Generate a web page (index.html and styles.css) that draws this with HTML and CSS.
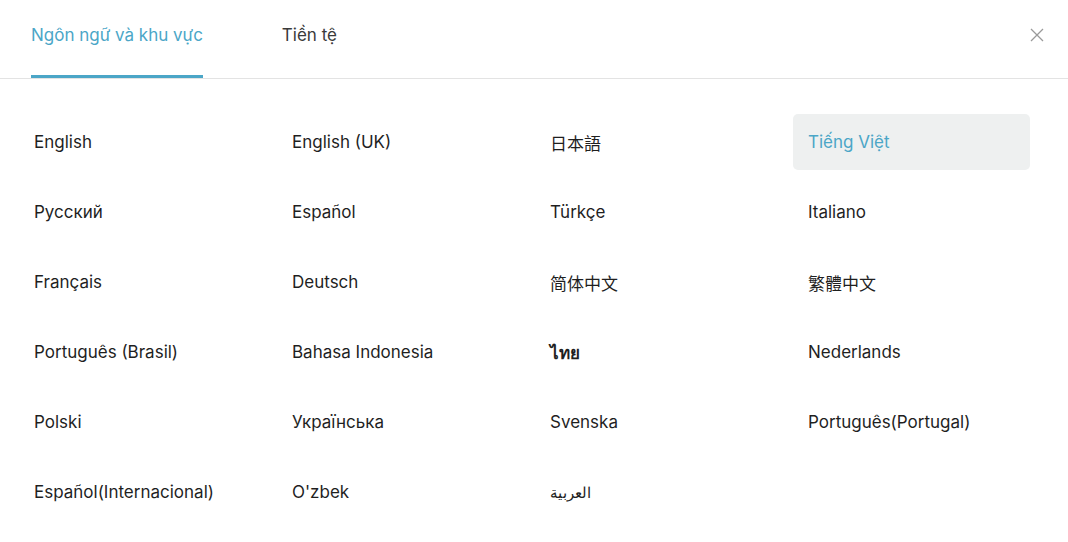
FILE: index.html
```
<!DOCTYPE html>
<html lang="vi">
<head>
    <meta charset="UTF-8">
    <meta name="viewport" content="width=device-width, initial-scale=1.0">
    <title>Ngôn ngữ và khu vực</title>
    <link rel="stylesheet" href="styles.css">
</head>
<body>

<div class="modal">
    <div class="modal-header">
        <div class="tabs">
            <div class="tab active">Ngôn ngữ và khu vực</div>
            <div class="tab">Tiền tệ</div>
        </div>
        <button class="close-btn" aria-label="Close">
            <svg width="14" height="14" viewBox="0 0 14 14">
                <path d="M1 1 L13 13 M13 1 L1 13" stroke="#9a9a9a" stroke-width="1.3" fill="none"/>
            </svg>
        </button>
    </div>
    <div class="lang-grid">
        <div class="lang">English</div>
        <div class="lang">English (UK)</div>
        <div class="lang">日本語</div>
        <div class="lang selected">Tiếng Việt</div>
        <div class="lang">Русский</div>
        <div class="lang">Español</div>
        <div class="lang">Türkçe</div>
        <div class="lang">Italiano</div>
        <div class="lang">Français</div>
        <div class="lang">Deutsch</div>
        <div class="lang">简体中文</div>
        <div class="lang">繁體中文</div>
        <div class="lang">Português (Brasil)</div>
        <div class="lang">Bahasa Indonesia</div>
        <div class="lang thai">ไทย</div>
        <div class="lang">Nederlands</div>
        <div class="lang">Polski</div>
        <div class="lang">Українська</div>
        <div class="lang">Svenska</div>
        <div class="lang">Português(Portugal)</div>
        <div class="lang">Español(Internacional)</div>
        <div class="lang">O'zbek</div>
        <div class="lang arabic">العربية</div>
    </div>
</div>

</body>
</html>
```

FILE: styles.css
```
body {
    margin: 0;
    background: #fff;
    font-family: Inter, "Noto Sans", "Noto Sans CJK SC", sans-serif;
    color: #333;
}
.modal {
    width: 1068px;
}
.modal-header {
    display: flex;
    justify-content: space-between;
    align-items: flex-start;
    border-bottom: 1px solid #e3e3e3;
    padding: 0 24px 0 31px;
    height: 78px;
}
.tabs {
    display: flex;
    gap: 79px;
}
.tab {
    height: 75px;
    line-height: 70px;
    font-size: 17px;
    color: #3a3a3a;
    border-bottom: 3px solid transparent;
    cursor: pointer;
}
.tab.active {
    color: #4ba6c7;
    border-bottom-color: #4ba6c7;
}
.close-btn {
    border: none;
    background: none;
    padding: 0;
    margin-top: 28px;
    cursor: pointer;
}
.lang-grid {
    display: grid;
    grid-template-columns: repeat(4, 237px);
    grid-auto-rows: 56px;
    column-gap: 21px;
    row-gap: 14px;
    padding: 35px 0 0 19px;
}
.lang {
    display: flex;
    align-items: center;
    padding-left: 15px;
    font-size: 17px;
    color: #1f1f1f;
    border-radius: 5px;
    cursor: pointer;
}
.lang.selected {
    background: #eef0f0;
    color: #4ba6c7;
}
.lang.thai {
    font-weight: 600;
}
.lang.arabic {
    font-size: 15px;
}
```
